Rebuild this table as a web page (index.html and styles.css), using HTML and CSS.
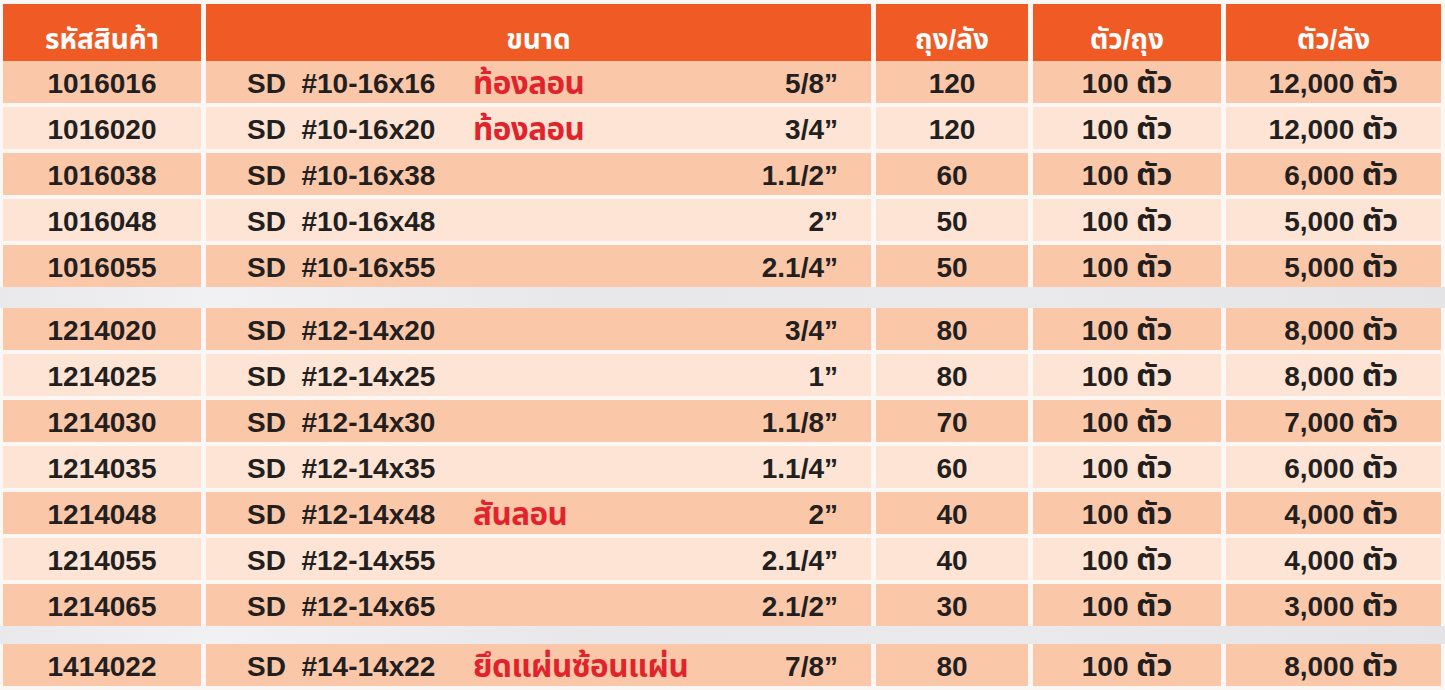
FILE: index.html
```html
<!DOCTYPE html>
<html lang="th">
<head>
<meta charset="utf-8">
<link rel="stylesheet" href="styles.css">
</head>
<body>
<div class="sheet">
  <div class="row head">
    <div class="cell">รหัสสินค้า</div>
    <div class="cell">ขนาด</div>
    <div class="cell">ถุง/ลัง</div>
    <div class="cell">ตัว/ถุง</div>
    <div class="cell">ตัว/ลัง</div>
  </div>
  <div class="group">
    <div class="row dark"><div class="cell">1016016</div><div class="cell size"><span>SD&nbsp; #10-16x16</span><span class="note">ท้องลอน</span><span class="inch">5/8”</span></div><div class="cell">120</div><div class="cell">100&nbsp;<span class="th">ตัว</span></div><div class="cell total">12,000&nbsp;<span class="th">ตัว</span></div></div>
    <div class="row light"><div class="cell">1016020</div><div class="cell size"><span>SD&nbsp; #10-16x20</span><span class="note">ท้องลอน</span><span class="inch">3/4”</span></div><div class="cell">120</div><div class="cell">100&nbsp;<span class="th">ตัว</span></div><div class="cell total">12,000&nbsp;<span class="th">ตัว</span></div></div>
    <div class="row dark"><div class="cell">1016038</div><div class="cell size"><span>SD&nbsp; #10-16x38</span><span class="note"></span><span class="inch">1.1/2”</span></div><div class="cell">60</div><div class="cell">100&nbsp;<span class="th">ตัว</span></div><div class="cell total">6,000&nbsp;<span class="th">ตัว</span></div></div>
    <div class="row light"><div class="cell">1016048</div><div class="cell size"><span>SD&nbsp; #10-16x48</span><span class="note"></span><span class="inch">2”</span></div><div class="cell">50</div><div class="cell">100&nbsp;<span class="th">ตัว</span></div><div class="cell total">5,000&nbsp;<span class="th">ตัว</span></div></div>
    <div class="row dark"><div class="cell">1016055</div><div class="cell size"><span>SD&nbsp; #10-16x55</span><span class="note"></span><span class="inch">2.1/4”</span></div><div class="cell">50</div><div class="cell">100&nbsp;<span class="th">ตัว</span></div><div class="cell total">5,000&nbsp;<span class="th">ตัว</span></div></div>
  </div>
  <div class="band"></div>
  <div class="group">
    <div class="row dark"><div class="cell">1214020</div><div class="cell size"><span>SD&nbsp; #12-14x20</span><span class="note"></span><span class="inch">3/4”</span></div><div class="cell">80</div><div class="cell">100&nbsp;<span class="th">ตัว</span></div><div class="cell total">8,000&nbsp;<span class="th">ตัว</span></div></div>
    <div class="row light"><div class="cell">1214025</div><div class="cell size"><span>SD&nbsp; #12-14x25</span><span class="note"></span><span class="inch">1”</span></div><div class="cell">80</div><div class="cell">100&nbsp;<span class="th">ตัว</span></div><div class="cell total">8,000&nbsp;<span class="th">ตัว</span></div></div>
    <div class="row dark"><div class="cell">1214030</div><div class="cell size"><span>SD&nbsp; #12-14x30</span><span class="note"></span><span class="inch">1.1/8”</span></div><div class="cell">70</div><div class="cell">100&nbsp;<span class="th">ตัว</span></div><div class="cell total">7,000&nbsp;<span class="th">ตัว</span></div></div>
    <div class="row light"><div class="cell">1214035</div><div class="cell size"><span>SD&nbsp; #12-14x35</span><span class="note"></span><span class="inch">1.1/4”</span></div><div class="cell">60</div><div class="cell">100&nbsp;<span class="th">ตัว</span></div><div class="cell total">6,000&nbsp;<span class="th">ตัว</span></div></div>
    <div class="row dark"><div class="cell">1214048</div><div class="cell size"><span>SD&nbsp; #12-14x48</span><span class="note">สันลอน</span><span class="inch">2”</span></div><div class="cell">40</div><div class="cell">100&nbsp;<span class="th">ตัว</span></div><div class="cell total">4,000&nbsp;<span class="th">ตัว</span></div></div>
    <div class="row light"><div class="cell">1214055</div><div class="cell size"><span>SD&nbsp; #12-14x55</span><span class="note"></span><span class="inch">2.1/4”</span></div><div class="cell">40</div><div class="cell">100&nbsp;<span class="th">ตัว</span></div><div class="cell total">4,000&nbsp;<span class="th">ตัว</span></div></div>
    <div class="row dark"><div class="cell">1214065</div><div class="cell size"><span>SD&nbsp; #12-14x65</span><span class="note"></span><span class="inch">2.1/2”</span></div><div class="cell">30</div><div class="cell">100&nbsp;<span class="th">ตัว</span></div><div class="cell total">3,000&nbsp;<span class="th">ตัว</span></div></div>
  </div>
  <div class="band band2"></div>
  <div class="group">
    <div class="row dark"><div class="cell">1414022</div><div class="cell size"><span>SD&nbsp; #14-14x22</span><span class="note">ยึดแผ่นซ้อนแผ่น</span><span class="inch">7/8”</span></div><div class="cell">80</div><div class="cell">100&nbsp;<span class="th">ตัว</span></div><div class="cell total">8,000&nbsp;<span class="th">ตัว</span></div></div>
  </div>
</div>
</body>
</html>
```

FILE: styles.css
```css
html, body {
  margin: 0;
  padding: 0;
}
body {
  background: #fbf7f5;
  font-family: "Liberation Sans", "Noto Sans Thai", "Noto Sans", "DejaVu Sans", sans-serif;
  font-weight: bold;
  color: #231f1f;
  width: 1445px;
  height: 690px;
  overflow: hidden;
}
.sheet {
  padding-top: 4px;
  display: flex;
  flex-direction: column;
}
.group {
  display: flex;
  flex-direction: column;
  gap: 4px;
}
.row {
  display: grid;
  grid-template-columns: 198px 665px 152px 188px 215px;
  column-gap: 5px;
  margin: 0 5px 0 3px;
  height: 42px;
}
.row .cell {
  display: flex;
  align-items: center;
  justify-content: center;
  font-size: 28px;
  padding-top: 3px;
  box-sizing: border-box;
  white-space: nowrap;
}
.th {
  font-size: 1.1em;
  line-height: 1;
}
.row.head {
  height: 57px;
}
.row.head .cell {
  background: #f05a24;
  color: #ffffff;
  font-size: 28px;
  line-height: 1;
  padding-top: 14px;
}
.row.dark .cell { background: #fbc7a9; }
.row.light .cell { background: #fde4d5; }
.row .cell.size {
  display: grid;
  grid-template-columns: 226px 1fr auto;
  align-items: center;
  justify-content: stretch;
  padding-left: 41px;
  padding-right: 33px;
}
.note {
  color: #e1242b;
  font-size: 1.12em;
  line-height: 1;
  letter-spacing: -0.5px;
}
.inch {
  text-align: right;
}
.row .cell.total {
  justify-content: flex-end;
  padding-right: 43px;
}
.band {
  height: 21px;
  background: linear-gradient(90deg, #e9e9ec 0%, #f1f1f3 15%, #e8e8ea 40%, #eaeaec 70%, #e4e4e7 100%);
}
.band2 {
  height: 18px;
}
```
